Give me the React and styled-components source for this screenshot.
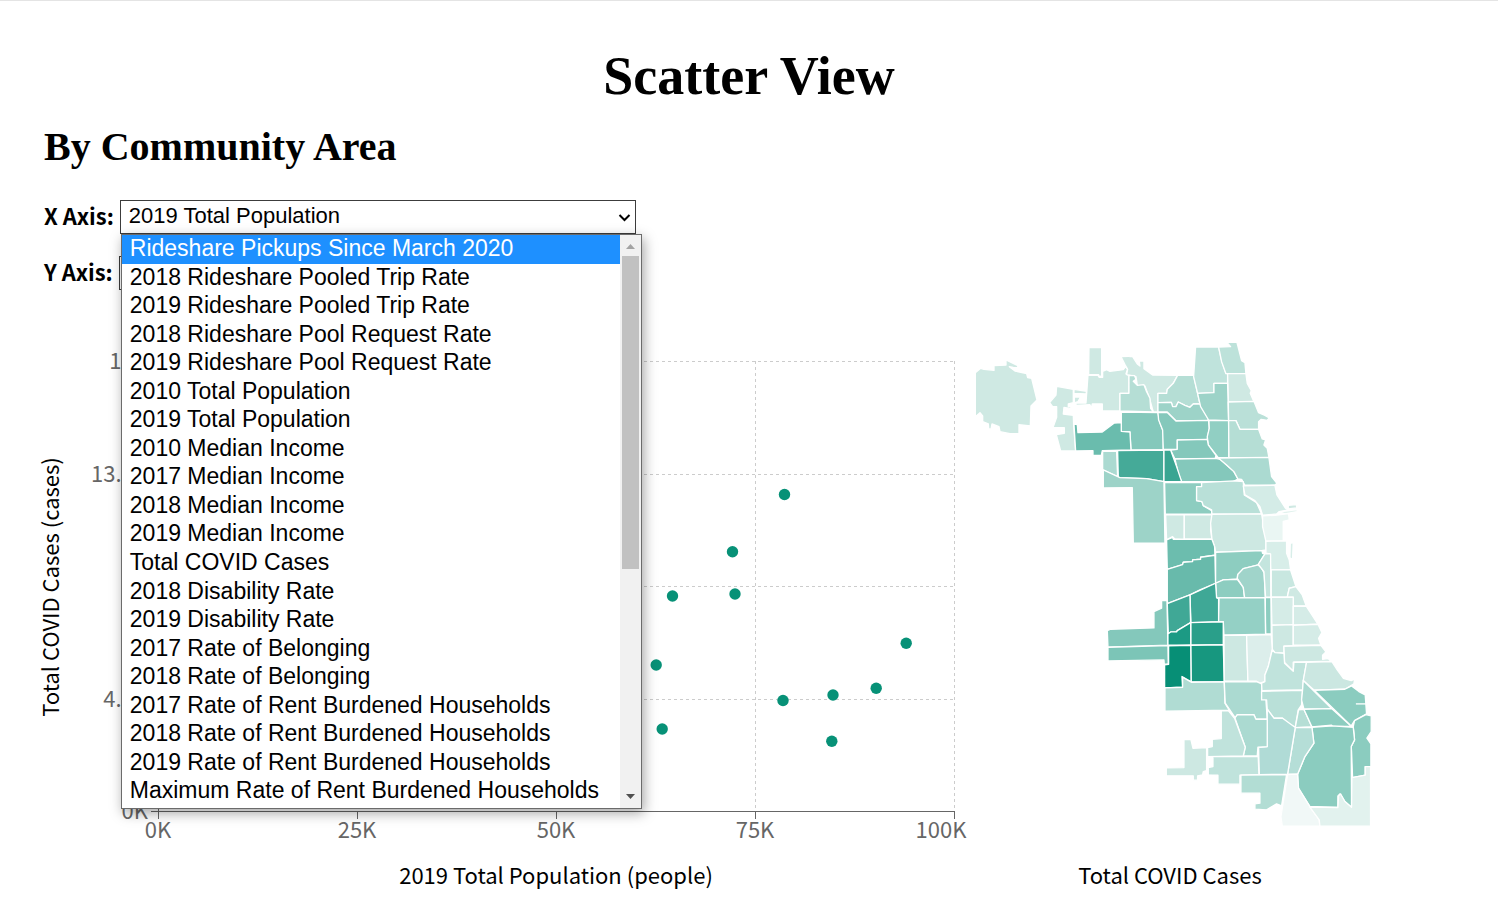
import React from "react";
import styled, { createGlobalStyle } from "styled-components";

const GlobalStyle = createGlobalStyle`
  *, *::before, *::after { box-sizing: border-box; }
  body {
    margin: 0;
    background: #fff;
    color: #000;
    font-family: "Noto Sans CJK SC", "Open Sans", sans-serif;
    font-size: 22px;
  }
`;

const Page = styled.main`
  border-top: 1px solid #e4e4e4;
  padding: 40px 44px 0;
`;

const Title = styled.h1`
  margin: 0;
  text-align: center;
  font: bold 54px/70px "Liberation Serif", serif;
`;

const Subtitle = styled.h2`
  margin: 8px 0 25px;
  font: bold 40px/56px "Liberation Serif", serif;
`;

const Controls = styled.form`
  display: grid;
  gap: 22px;
`;

const Field = styled.div`
  display: flex;
  align-items: flex-start;
  gap: 6px;
  height: 34px;
`;

const FieldLabel = styled.label`
  font-weight: 600;
  line-height: 30px;
`;

const Picker = styled.div`
  position: relative;
  width: 516px;
  height: 34px;
`;

const Select = styled.select`
  display: block;
  appearance: none;
  width: 100%;
  height: 34px;
  padding: 0 32px 2px 8px;
  border: 1px solid #3c3c3c;
  border-radius: 0;
  background: #fff;
  color: #000;
  font: 22px/30px "Liberation Sans", sans-serif;
`;

const Chevron = styled.svg`
  position: absolute;
  right: 5px;
  top: 13px;
  width: 13px;
  height: 10px;
  pointer-events: none;
`;

const Menu = styled.div`
  position: absolute;
  z-index: 2;
  top: 34px;
  left: 1px;
  display: flex;
  width: 521px;
  height: 575px;
  border: 1px solid #6b6b6b;
  background: #fff;
  box-shadow: 2px 4px 12px rgba(0, 0, 0, 0.36);
`;

const OptionList = styled.ul`
  flex: 1;
  display: grid;
  grid-auto-rows: 1fr;
  margin: 0;
  padding: 0 0 2px;
  list-style: none;
  font: 23px/26px "Liberation Sans", sans-serif;
`;

const Option = styled.li`
  padding-left: 8px;
  white-space: nowrap;
  background: ${(p) => (p.$active ? "#1e90ff" : "transparent")};
  color: ${(p) => (p.$active ? "#fff" : "#000")};
`;

const ScrollTrack = styled.div`
  display: flex;
  flex-direction: column;
  align-items: center;
  width: 21px;
  background: #f1f1f1;
`;

const ScrollThumb = styled.div`
  width: 17px;
  height: 313px;
  background: #c1c1c1;
`;

const ScrollArrow = styled.svg`
  width: 11px;
  height: 21px;
  margin-top: ${(p) => (p.$end ? "auto" : 0)};
`;

const Views = styled.section`
  display: grid;
  grid-template-columns: 916fr 494fr;
  margin-top: 40px;
`;

const ChartFigure = styled.figure`
  margin: 0;
`;

const MapFigure = styled.figure`
  width: 85%;
  margin: 0;
`;

const Drawing = styled.svg`
  display: block;
  width: 100%;
  height: auto;
  overflow: visible;
`;

const MapCaption = styled.figcaption`
  margin-top: 28px;
  text-align: center;
  line-height: 32px;
`;

const AxisText = styled.text`
  fill: #666;
  font-size: 22px;
  text-anchor: ${(p) => (p.$end ? "end" : "middle")};
`;

const AxisTitle = styled.text`
  fill: #000;
  font-size: 22px;
  text-anchor: middle;
`;

const Area = styled.polygon`
  stroke: #fff;
  stroke-width: 4;
  stroke-linejoin: round;
`;

const OPTIONS = [
  "Rideshare Pickups Since March 2020",
  "2018 Rideshare Pooled Trip Rate",
  "2019 Rideshare Pooled Trip Rate",
  "2018 Rideshare Pool Request Rate",
  "2019 Rideshare Pool Request Rate",
  "2010 Total Population",
  "2019 Total Population",
  "2010 Median Income",
  "2017 Median Income",
  "2018 Median Income",
  "2019 Median Income",
  "Total COVID Cases",
  "2018 Disability Rate",
  "2019 Disability Rate",
  "2017 Rate of Belonging",
  "2018 Rate of Belonging",
  "2017 Rate of Rent Burdened Households",
  "2018 Rate of Rent Burdened Households",
  "2019 Rate of Rent Burdened Households",
  "Maximum Rate of Rent Burdened Households",
];

const POINTS = [
  [740.5, 164.5], [688.5, 221.8], [628.5, 266], [691, 264], [862.2, 313.2],
  [612.2, 335], [739, 370.5], [789, 365], [832.2, 358.2], [618.2, 399], [787.8, 411.2],
];

const X_TICKS = [[114, "0K"], [313, "25K"], [512, "50K"], [711, "75K"], [910, "100K"]];
const Y_TICKS = [[481, "0K"], [369, "4.5K"], [256, "9K"], [144, "13.5K"], [31, "18K"]];

const AREAS = [
  ["#cfe9e3", "46,128 62,115 72,118 102,121 102,107 138,105 138,90 172,106 176,113 160,112 148,110 165,123 200,131 203,143 215,145 231,210 213,228 211,288 177,284 177,311 150,311 120,305 117,290 96,282 93,298 86,296 85,282 68,275 68,258 60,248 46,260"],
  ["#cfe9e3", "290,169 340,178 340,218 325,222 325,230 333,230 333,236 312,232 310,252 340,256 341,285 347,363 302,363 289,314 313,310 313,293 279,293 290,262 290,230 278,230 269,218 288,195"],
  ["#cfe9e3", "342,178 380,184 378,192 342,190"],
  ["#cfe9e3", "343,201 362,201 354,215 343,219"],
  ["#cfe9e3", "387,53 425,53 425,138 418,140 416,134 386,134"],
  ["#cfe9e3", "384,136 414,136 418,142 428,142 428,124 440,119 450,124 490,119 497,110 503,118 498,132 507,136 507,190 480,190 480,243 427,243 427,222 397,222 394,236 390,224 348,226 348,219 378,219"],
  ["#cfe9e3", "483,80 506,79 508,66 510,80 518,80 532,102 540,108 538,93 552,93 552,116 578,135 653,136 640,160 622,178 620,190 594,190 594,246 580,246 570,210 555,168 532,166 528,140 500,134 503,118 495,104"],
  ["#b5ded5", "507,136 524,137 528,148 520,154 532,166 552,164 560,185 570,205 572,235 580,246 480,243 480,190 507,190"],
  ["#b5ded5", "653,136 701,136 713,190 720,222 700,222 690,232 675,226 655,216 648,230 638,230 634,217 594,218 594,190 620,190 622,178 640,160"],
  ["#9dd3c8", "594,218 634,217 638,230 648,230 655,216 675,226 690,232 700,222 720,222 746,268 742,272 648,272 622,246 594,246"],
  ["#bfe3dc", "707,51 776,51 785,90 798,130 803,131 803,160 762,160 762,188 713,190 701,140"],
  ["#bde2da", "776,51 812,50 801,37 831,37 845,92 855,98 858,131 798,131 785,95"],
  ["#cfe9e3", "803,131 858,131 862,160 874,182 871,190 882,215 805,216"],
  ["#9dd3c8", "762,160 803,160 806,272 746,270 722,230 713,190 762,188"],
  ["#bae0d8", "805,216 882,214 896,248 915,256 928,264 922,271 904,268 896,275 896,298 840,298 828,272 806,272"],
  ["#84c8bb", "484,246 594,248 600,278 610,305 610,360 513,360 510,306 484,304"],
  ["#84c8bb", "594,248 622,248 648,273 746,271 748,295 742,328 652,330 652,358 610,358 608,300 596,270"],
  ["#91cfc3", "747,272 806,272 807,382 775,383 745,345 742,320 748,295"],
  ["#b5ded5", "806,272 828,272 840,298 896,298 907,327 917,330 912,345 922,355 927,382 807,383"],
  ["#84c8bb", "652,330 742,328 745,345 768,376 766,385 645,387 632,360 652,358"],
  ["#84c8bb", "645,387 766,385 782,388 800,405 822,425 834,447 820,455 665,455 655,430"],
  ["#abdad1", "775,384 927,382 935,440 951,460 945,466 855,466 845,448 834,447 822,425 800,405"],
  ["#45aa98", "473,362 612,360 612,455 560,446 475,443"],
  ["#3aa592", "612,360 632,360 650,410 665,455 612,455"],
  ["#abdad1", "428,364 470,364 473,440 428,420"],
  ["#6abcad", "342,282 352,284 354,308 427,306 463,279 484,278 484,304 510,306 513,360 427,362 424,376 399,376 399,362 347,363"],
  ["#9dd3c8", "430,420 480,443 560,446 612,455 615,640 520,640 517,473 430,474"],
  ["#8dcdc0", "614,458 725,457 725,470 710,470 710,512 726,515 730,527 755,542 756,553 616,553"],
  ["#b9e0d8", "725,458 822,453 850,455 853,495 890,518 905,552 756,553 755,540 730,527 726,515 710,512 710,470 725,470"],
  ["#d4ece7", "850,468 945,466 951,495 977,535 985,540 958,545 950,552 908,556 900,530 885,512 855,495"],
  ["#cfe9e3", "985,526 1010,524 1010,534 985,537"],
  ["#e2f2ee", "958,546 1012,539 1012,545 975,552"],
  ["#cfe9e3", "617,555 673,555 673,630 645,628 638,620 620,630"],
  ["#cfe9e3", "673,555 756,555 752,600 756,628 673,628"],
  ["#cde8e2", "756,553 905,552 910,580 918,620 918,660 905,662 767,667 764,650 756,628 752,580"],
  ["#eaf6f3", "908,558 945,556 986,551 988,570 970,574 970,633 918,634 908,590"],
  ["#d8eee9", "918,634 980,633 980,670 988,690 992,720 932,720 930,672 918,670"],
  ["#d8eee9", "991,640 1000,638 998,688 990,684"],
  ["#6cbdae", "620,630 638,622 640,628 756,628 764,650 765,676 722,682 722,688 698,690 698,695 670,697 668,704 622,718"],
  ["#68baab", "622,718 668,704 670,697 698,695 698,690 722,688 722,682 765,676 767,760 720,780 690,795 622,821"],
  ["#8dcdc0", "767,667 906,662 908,670 915,672 895,705 850,716 833,735 832,748 790,750 767,760"],
  ["#8dcdc0", "767,760 790,750 832,748 850,772 854,803 770,804"],
  ["#a0d4ca", "850,716 895,705 905,715 913,730 916,803 854,803 850,772 832,745 834,733"],
  ["#c4e5de", "895,703 915,672 932,672 933,802 917,802 912,725"],
  ["#c8e7e0", "934,720 992,720 1008,770 988,775 982,802 934,802"],
  ["#cfe9e3", "988,775 1008,770 1027,795 1039,828 1000,828 1000,802 982,802"],
  ["#d5ece7", "934,802 1000,802 1000,886 936,886"],
  ["#d5ece7", "1000,829 1039,829 1074,883 1000,886"],
  ["#cde8e2", "936,886 1000,884 1000,947 972,949 972,970 945,968 937,958"],
  ["#d5ece7", "1000,886 1074,883 1086,908 1076,925 1083,946 1000,946"],
  ["#cde8e2", "972,949 1083,946 1098,966 1088,976 1088,988 1104,986 1114,994 1000,997 1000,1024 974,998"],
  ["#8dcdc0", "916,803 933,803 934,912 917,912"],
  ["#94d0c5", "777,804 915,803 917,913 792,916 790,875 775,875"],
  ["#3fa896", "690,795 767,760 770,804 776,806 776,875 693,878"],
  ["#40a896", "622,821 690,795 692,878 652,902 650,907 632,907 625,913"],
  ["#84c8bb", "582,845 605,835 605,812 621,812 624,946 444,952 442,902 452,898 582,894"],
  ["#7cc5b7", "444,952 624,947 625,1003 613,1003 612,990 444,993"],
  ["#1c9a84", "624,912 632,906 650,906 652,902 692,878 693,945 624,946"],
  ["#2a9f8a", "693,878 790,876 790,944 693,946"],
  ["#078f76", "626,948 693,946 694,1056 666,1040 668,1072 614,1074 614,1005 626,1003"],
  ["#17977f", "693,946 790,945 793,1055 694,1056"],
  ["#cde8e2", "792,916 860,916 864,1054 793,1054"],
  ["#dceeeb", "860,916 934,914 937,958 925,1010 915,1035 914,1055 900,1060 890,1054 864,1054"],
  ["#b0dcd3", "615,1074 668,1072 668,1042 694,1057 793,1056 795,1120 808,1141 615,1144"],
  ["#abdad1", "793,1056 890,1055 905,1062 906,1085 918,1110 922,1168 888,1168 882,1154 832,1154 826,1164 796,1120"],
  ["#c0e3dc", "937,960 945,968 972,970 974,1000 1000,1024 1002,997 1040,997 1030,1055 1028,1080 906,1082 905,1060 915,1055 915,1035 925,1010"],
  ["#cbe7e1", "1040,997 1116,995 1132,1020 1150,1045 1174,1052 1184,1048 1182,1062 1155,1078 1063,1081 1030,1052"],
  ["#b9e0d8", "905,1084 1028,1081 1025,1125 1015,1140 1006,1192 985,1180 968,1165 942,1165 922,1138 920,1110 905,1110"],
  ["#abdad1", "1030,1052 1115,1136 1032,1138 1025,1110 1028,1080"],
  ["#b5ded5", "1016,1140 1032,1138 1056,1191 1006,1193"],
  ["#8dcdc0", "1032,1138 1115,1136 1174,1189 1118,1190 1115,1186 1056,1191"],
  ["#8bccbf", "1063,1081 1155,1078 1175,1068 1197,1085 1216,1095 1220,1152 1184,1172 1174,1188"],
  ["#8bccbf", "1218,1154 1234,1158 1234,1205 1221,1225 1233,1242 1233,1310 1216,1310 1216,1336 1178,1343 1175,1265 1174,1250 1184,1230 1180,1190 1184,1172"],
  ["#8bccbf", "1056,1192 1118,1188 1180,1192 1184,1230 1174,1250 1175,1432 1155,1415 1140,1392 1134,1398 1134,1433 1050,1430 1015,1375 1013,1333 1035,1280 1062,1240"],
  ["#b5ded7", "1006,1193 1056,1192 1062,1240 1035,1280 1013,1333 983,1333"],
  ["#b0dbd6", "922,1138 942,1165 968,1165 1006,1193 983,1333 898,1334 896,1252 922,1250"],
  ["#abdad1", "825,1164 832,1155 882,1155 888,1168 922,1168 922,1250 894,1252 892,1278 850,1278 856,1252"],
  ["#c0e3dc", "784,1143 805,1142 824,1165 856,1252 850,1278 743,1280 743,1253 757,1250 757,1228 784,1226"],
  ["#c0e3dc", "743,1280 892,1280 895,1282 897,1334 840,1336 840,1363 774,1363 774,1336 745,1335 745,1313 759,1310 759,1284"],
  ["#cde8e2", "672,1229 693,1229 699,1255 740,1253 740,1322 730,1325 728,1335 713,1338 713,1351 700,1351 700,1338 619,1338 619,1314 672,1313"],
  ["#b2ddd4", "843,1336 980,1334 965,1428 950,1422 920,1440 885,1438 885,1422 900,1420 900,1390 843,1390"],
  ["#f1f8f7", "983,1334 1013,1333 1016,1375 1050,1430 1078,1470 1080,1489 967,1489 963,1460"],
  ["#e2f2ee", "1050,1432 1134,1433 1136,1398 1142,1392 1155,1415 1175,1432 1176,1343 1216,1336 1216,1310 1232,1310 1232,1489 1080,1489 1078,1470"],
];

function ScatterChart() {
  return (
    <ChartFigure>
      <Drawing viewBox="0 0 916 570" role="img" aria-label="Total COVID cases by 2019 total population">
        <g stroke="#ccc" strokeDasharray="3 3" shapeRendering="crispEdges">
          {Y_TICKS.slice(1).map(([y]) => <line key={y} x1="114" x2="910" y1={y + 0.5} y2={y + 0.5} />)}
          {X_TICKS.slice(1).map(([x]) => <line key={x} x1={x + 0.5} x2={x + 0.5} y1="31" y2="481" />)}
        </g>
        <g stroke="#666" shapeRendering="crispEdges">
          <line x1="114" x2="910" y1="481.5" y2="481.5" />
          <line x1="114.5" x2="114.5" y1="31" y2="481" />
          {X_TICKS.map(([x]) => <line key={x} x1={x + 0.5} x2={x + 0.5} y1="481" y2="489" />)}
          {Y_TICKS.map(([y]) => <line key={y} x1="107" x2="114" y1={y + 0.5} y2={y + 0.5} />)}
        </g>
        {X_TICKS.map(([x, label], i) => (
          <AxisText key={label} x={i === 4 ? 897 : x} y="508">{label}</AxisText>
        ))}
        {Y_TICKS.map(([y, label]) => <AxisText key={label} $end x="104" y={y + 8}>{label}</AxisText>)}
        <AxisTitle x="512" y="554">2019 Total Population (people)</AxisTitle>
        <AxisTitle transform="translate(15 257) rotate(-90)">Total COVID Cases (cases)</AxisTitle>
        {POINTS.map(([x, y]) => <circle key={`${x}-${y}`} cx={x} cy={y} r="5.7" fill="#079177" />)}
      </Drawing>
    </ChartFigure>
  );
}

function CommunityMap() {
  return (
    <MapFigure>
      <Drawing viewBox="0 0 1260 1500" role="img" aria-label="Map of Chicago community areas">
        {AREAS.map(([fill, points], i) => <Area key={i} fill={fill} points={points} />)}
        <path d="M1188 1122H1220" stroke="#fff" strokeWidth="4" />
      </Drawing>
      <MapCaption>Total COVID Cases</MapCaption>
    </MapFigure>
  );
}

function SelectField({ id, label, value, open }) {
  return (
    <Field>
      <FieldLabel htmlFor={id}>{label}</FieldLabel>
      <Picker>
        <Select id={id} defaultValue={value}>
          {OPTIONS.map((o) => <option key={o}>{o}</option>)}
        </Select>
        <Chevron viewBox="0 0 13 10" aria-hidden="true">
          <path d="M1.5 2L6.5 7L11.5 2" fill="none" stroke="#000" strokeWidth="2" />
        </Chevron>
        {open && (
          <Menu>
            <OptionList role="listbox" aria-label={label}>
              {OPTIONS.map((o, i) => (
                <Option key={o} role="option" aria-selected={i === 0} $active={i === 0}>{o}</Option>
              ))}
            </OptionList>
            <ScrollTrack>
              <ScrollArrow viewBox="0 0 11 21" aria-hidden="true">
                <path d="M1 14L5.500 9L10 14Z" fill="#a3a3a3" />
              </ScrollArrow>
              <ScrollThumb />
              <ScrollArrow $end viewBox="0 0 11 21" aria-hidden="true">
                <path d="M1 7L5.500 12L10 7Z" fill="#505050" />
              </ScrollArrow>
            </ScrollTrack>
          </Menu>
        )}
      </Picker>
    </Field>
  );
}

export default function App() {
  return (
    <>
      <GlobalStyle />
      <Page>
        <Title>Scatter View</Title>
        <Subtitle>By Community Area</Subtitle>
        <Controls>
          <SelectField id="x-axis" label="X Axis:" value="2019 Total Population" open />
          <SelectField id="y-axis" label="Y Axis:" value="Total COVID Cases" />
        </Controls>
        <Views>
          <ScatterChart />
          <CommunityMap />
        </Views>
      </Page>
    </>
  );
}
